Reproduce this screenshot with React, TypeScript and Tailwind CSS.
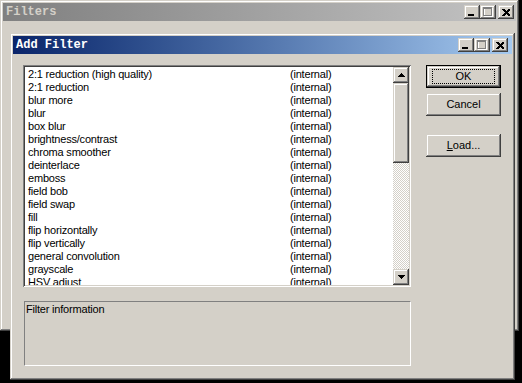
const filters = [
  "2:1 reduction (high quality)",
  "2:1 reduction",
  "blur more",
  "blur",
  "box blur",
  "brightness/contrast",
  "chroma smoother",
  "deinterlace",
  "emboss",
  "field bob",
  "field swap",
  "fill",
  "flip horizontally",
  "flip vertically",
  "general convolution",
  "grayscale",
  "HSV adjust",
];

const raised =
  "shadow-[inset_-1px_-1px_#404040,inset_1px_1px_#d4d0c8,inset_-2px_-2px_#808080,inset_2px_2px_#ffffff]";
const sunken =
  "shadow-[inset_1px_1px_#808080,inset_-1px_-1px_#ffffff,inset_2px_2px_#404040,inset_-2px_-2px_#d4d0c8]";

const CaptionButtons = () => (
  <div className="flex items-center">
    <div className={`w-[16px] h-[14px] bg-[#d4d0c8] ${raised} flex items-end`}>
      <div className="ml-[4px] mb-[3px] w-[6px] h-[2px] bg-black" />
    </div>
    <div className={`w-[16px] h-[14px] bg-[#d4d0c8] ${raised} flex items-center justify-center`}>
      <svg width="10" height="10" viewBox="0 0 10 10" shapeRendering="crispEdges">
        <rect x="1.5" y="1.5" width="8" height="8" fill="none" stroke="#ffffff" />
        <rect x="0.5" y="0.5" width="8" height="8" fill="none" stroke="#808080" />
        <rect x="0" y="1" width="9" height="1" fill="#808080" />
      </svg>
    </div>
    <div className={`ml-[2px] w-[16px] h-[14px] bg-[#d4d0c8] ${raised} flex items-center justify-center`}>
      <svg width="8" height="7" viewBox="0 0 8 7" shapeRendering="crispEdges">
        <path d="M0 0h2l2 2 2-2h2v1l-2.5 2.5L8 6v1H6L4 5 2 7H0V6l2.5-2.5L0 1z" fill="#000" />
      </svg>
    </div>
  </div>
);

const Button = ({ label, isDefault, mt }: { label: React.ReactNode; isDefault?: boolean; mt: string }) => (
  <div
    className={`${mt} w-[75px] h-[23px] bg-[#d4d0c8] ${
      isDefault ? "border border-black" : ""
    } ${raised} flex items-center justify-center text-[11px] text-black`}
  >
    <span
      className={
        isDefault
          ? "w-[63px] h-[15px] border border-dotted border-black flex items-center justify-center"
          : ""
      }
    >
      {label}
    </span>
  </div>
);

export default function App() {
  return (
    <div className="relative w-[522px] h-[383px] bg-black overflow-hidden font-['Liberation_Sans',Arial,sans-serif]">
      {/* Filters window */}
      <div className={`absolute left-0 top-0 w-[519px] h-[331px] bg-[#d4d0c8] ${raised} p-[3px]`}>
        <div className="h-[18px] bg-gradient-to-r from-[#808080] to-[#c4c4c4] flex items-center justify-between pl-[3px] pr-[2px]">
          <span className="font-['Liberation_Mono',monospace] font-bold text-[12px] text-[#d4d0c8]">
            Filters
          </span>
          <CaptionButtons />
        </div>
      </div>

      {/* Add Filter dialog */}
      <div className={`absolute left-[10px] top-[33px] w-[505px] h-[347px] bg-[#d4d0c8] ${raised} p-[3px] flex flex-col`}>
        <div className="h-[18px] bg-gradient-to-r from-[#0a246a] to-[#a6caf0] flex items-center justify-between pl-[3px] pr-[4px]">
          <span className="font-['Liberation_Mono',monospace] font-bold text-[12px] text-white">
            Add Filter
          </span>
          <CaptionButtons />
        </div>

        <div className="flex pl-[10px] pt-[11px]">
          <div className="flex flex-col">
            {/* list */}
            <div className={`w-[388px] h-[222px] bg-white ${sunken} p-[2px] flex`}>
              <div className="flex-1 overflow-hidden pt-[1px]">
                {filters.map((f) => (
                  <div key={f} className="flex h-[13px] leading-[13px] text-[11px] text-black tracking-[-0.2px]">
                    <span className="w-[265px] pl-[3px] whitespace-nowrap">{f}</span>
                    <span>(internal)</span>
                  </div>
                ))}
              </div>
              <div className="w-[16px] flex flex-col">
                <div className={`h-[16px] bg-[#d4d0c8] ${raised} flex items-center justify-center`}>
                  <svg width="7" height="4" viewBox="0 0 7 4" shapeRendering="crispEdges">
                    <path d="M3 0h1v1h1v1h1v1h1v1H0V3h1V2h1V1h1z" fill="#000" />
                  </svg>
                </div>
                <div className={`h-[80px] bg-[#d4d0c8] ${raised}`} />
                <div className="flex-1 bg-[repeating-conic-gradient(#ffffff_0_25%,#d4d0c8_0_50%)] bg-[length:2px_2px]" />
                <div className={`h-[16px] bg-[#d4d0c8] ${raised} flex items-center justify-center`}>
                  <svg width="7" height="4" viewBox="0 0 7 4" shapeRendering="crispEdges">
                    <path d="M0 0h7v1H6v1H5v1H4v1H3V3H2V2H1V1H0z" fill="#000" />
                  </svg>
                </div>
              </div>
            </div>

            {/* info */}
            <div className="ml-[1px] mt-[14px] w-[387px] h-[65px] border-t border-l border-[#808080] border-b-white border-r-white border-b border-r">
              <div className="pl-[1px] pt-[1px] text-[11px] leading-[13px] text-black tracking-[-0.2px]">
                Filter information
              </div>
            </div>
          </div>

          {/* buttons */}
          <div className="ml-[15px] flex flex-col">
            <Button label="OK" isDefault mt="mt-0" />
            <Button label="Cancel" mt="mt-[5px]" />
            <Button
              label={
                <span>
                  <span className="underline">L</span>oad...
                </span>
              }
              mt="mt-[18px]"
            />
          </div>
        </div>
      </div>
    </div>
  );
}
